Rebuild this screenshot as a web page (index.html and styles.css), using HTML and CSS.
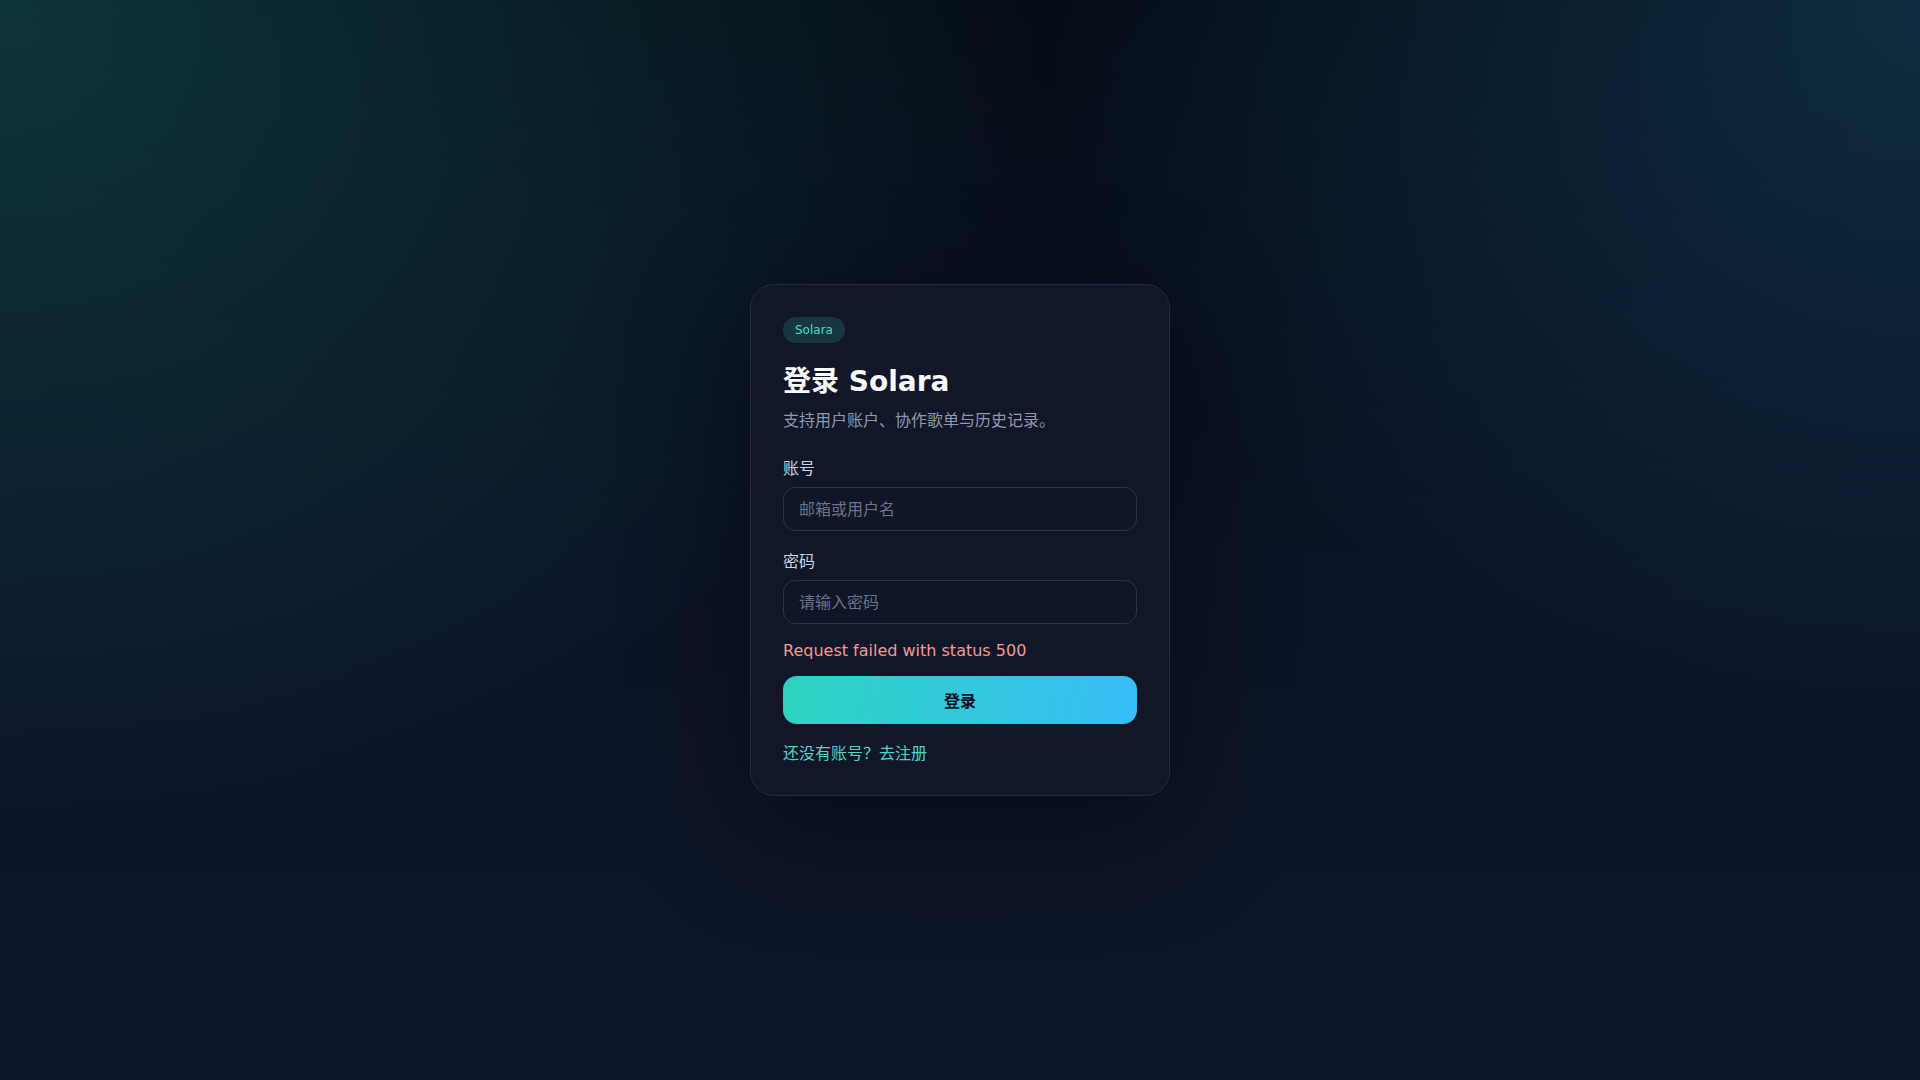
FILE: index.html
```html
<!DOCTYPE html>
<html lang="zh-CN">
<head>
<meta charset="utf-8">
<title>登录 Solara</title>
<link rel="stylesheet" href="styles.css">
</head>
<body>
<main class="page">
  <section class="card">
    <span class="badge">Solara</span>
    <h1 class="title">登录 Solara</h1>
    <p class="subtitle">支持用户账户、协作歌单与历史记录。</p>
    <form class="form">
      <label class="field">
        <span class="label">账号</span>
        <input class="input" type="text" placeholder="邮箱或用户名">
      </label>
      <label class="field">
        <span class="label">密码</span>
        <input class="input" type="password" placeholder="请输入密码">
      </label>
      <p class="error">Request failed with status 500</p>
      <button class="submit" type="button">登录</button>
    </form>
    <a class="link" href="#">还没有账号？去注册</a>
  </section>
</main>
</body>
</html>
```

FILE: styles.css
```css
* { box-sizing: border-box; }
html, body { margin: 0; height: 100%; }
body {
  font-family: "DejaVu Sans", "Noto Sans CJK SC", sans-serif;
  color: #e2e8f0;
  background:
    radial-gradient(ellipse 1050px 820px at 0% 0%, rgba(45, 212, 191, 0.2), rgba(45, 212, 191, 0) 100%),
    radial-gradient(ellipse 880px 720px at 100% 0%, rgba(56, 189, 248, 0.18), rgba(56, 189, 248, 0) 100%),
    linear-gradient(180deg, #050c17 0%, #0b1426 55%, #0e1629 100%);
}
.page {
  height: 100%;
  display: flex;
  align-items: center;
  justify-content: center;
}
.card {
  width: 420px;
  padding: 32px;
  border: 1px solid #222b3c;
  border-radius: 24px;
  background: #111729;
  box-shadow: 0 30px 120px rgba(0, 0, 0, 0.45);
  display: flex;
  flex-direction: column;
  align-items: flex-start;
}
.badge {
  font-size: 12px;
  line-height: 14px;
  padding: 6px 12px;
  border-radius: 999px;
  background: rgba(45, 212, 191, 0.17);
  color: #4fd8c4;
}
.title {
  margin: 21px 0 0;
  font-size: 28px;
  line-height: 36px;
  font-weight: 700;
  color: #f8fafc;
}
.subtitle {
  margin: 9px 0 0;
  font-size: 16px;
  line-height: 24px;
  color: #8e9aae;
}
.form {
  align-self: stretch;
  margin-top: 22px;
  display: flex;
  flex-direction: column;
}
.field {
  display: flex;
  flex-direction: column;
  gap: 6px;
}
.field + .field { margin-top: 17px; }
.label {
  margin-top: 2px;
  font-size: 16px;
  line-height: 24px;
  color: #cbd5e1;
}
.input {
  height: 44px;
  width: 100%;
  padding: 0 15px;
  border: 1px solid #2b3547;
  border-radius: 12px;
  background: #0f1627;
  color: #e2e8f0;
  font: inherit;
  font-size: 16px;
  outline: none;
}
.input::placeholder { color: #6b7587; }
.error {
  margin: 15px 0 0;
  font-size: 16px;
  line-height: 24px;
  color: #f39a98;
}
.submit {
  margin-top: 13px;
  height: 48px;
  border: 0;
  border-radius: 14px;
  background: linear-gradient(100deg, #2dd4bf 0%, #38bdf8 100%);
  color: #0b1324;
  font: inherit;
  font-size: 16px;
  font-weight: 700;
  cursor: pointer;
}
.link {
  margin-top: 20px;
  font-size: 16px;
  line-height: 19px;
  color: #4dd6c4;
  text-decoration: none;
}
```
